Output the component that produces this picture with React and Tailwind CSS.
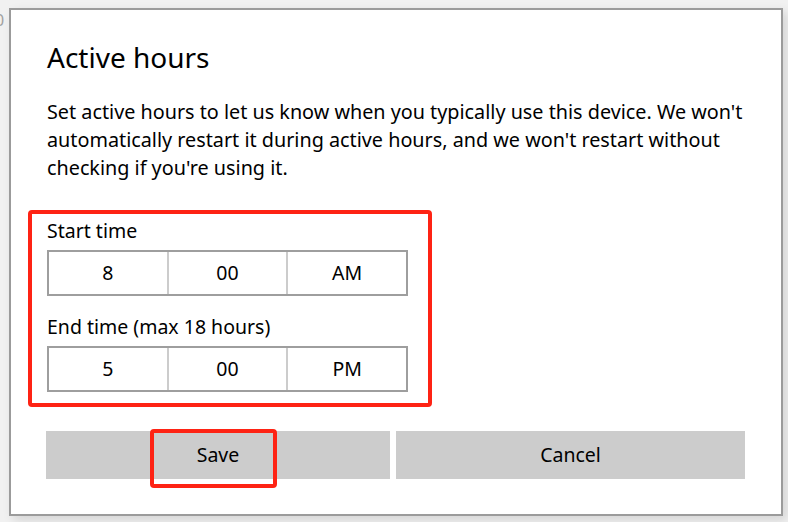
import React from "react";

const font = { fontFamily: '"Noto Sans", "Open Sans", sans-serif' };

const TimeRow = ({ values }) => (
  <div className="flex w-[361px] h-[46px] border-2 border-[#9e9e9e] bg-white">
    {values.map((v, i) => (
      <div
        key={i}
        className={`flex-1 flex items-center justify-center text-[19.5px] text-black ${i > 0 ? "border-l-2 border-[#cccccc]" : ""}`}
      >
        {v}
      </div>
    ))}
  </div>
);

export default function App() {
  return (
    <div
      className="relative w-[788px] h-[522px] overflow-hidden bg-[#f1f1f1] pt-[8px] pl-[9px]"
      style={font}
    >
      {/* bit of the window behind */}
      <span className="absolute left-[-5px] top-[8px] text-[16px] leading-[24px] text-[#a0a0a0]">0</span>

      {/* --- DIALOG --- */}
      <div className="relative w-[774px] h-[508px] bg-white border-2 border-[#9b9b9b] shadow-[4px_4px_10px_rgba(0,0,0,0.12)] pl-[36px] pt-[27px]">
        <h1 className="text-[28px] leading-[40px] text-black font-normal">Active hours</h1>

        <p className="mt-[21px] w-[720px] text-[19.8px] leading-[28px] text-black">
          Set active hours to let us know when you typically use this device. We won't
          automatically restart it during active hours, and we won't restart without
          checking if you're using it.
        </p>

        {/* red highlight around the time pickers */}
        <div className="mt-[28px] ml-[-19px] w-[404px] border-4 border-[#fe2314] rounded-[4px] pl-[15px] pt-[3px] pb-[11px]">
          <div className="text-[19.5px] leading-[28px] text-black">Start time</div>
          <div className="mt-[5px]">
            <TimeRow values={["8", "00", "AM"]} />
          </div>
          <div className="mt-[17px] text-[19.5px] leading-[28px] text-black">End time (max 18 hours)</div>
          <div className="mt-[5px]">
            <TimeRow values={["5", "00", "PM"]} />
          </div>
        </div>

        {/* --- BUTTONS --- */}
        <div className="relative mt-[24px] ml-[-1px] flex gap-[6px]">
          <button className="w-[344px] h-[48px] bg-[#cccccc] text-[19.5px] text-black">Save</button>
          <button className="w-[349px] h-[48px] bg-[#cccccc] text-[19.5px] text-black">Cancel</button>
          <div className="absolute left-[104px] top-[-2px] w-[127px] h-[59px] border-4 border-[#fe2314] rounded-[4px]" />
        </div>
      </div>
    </div>
  );
}
